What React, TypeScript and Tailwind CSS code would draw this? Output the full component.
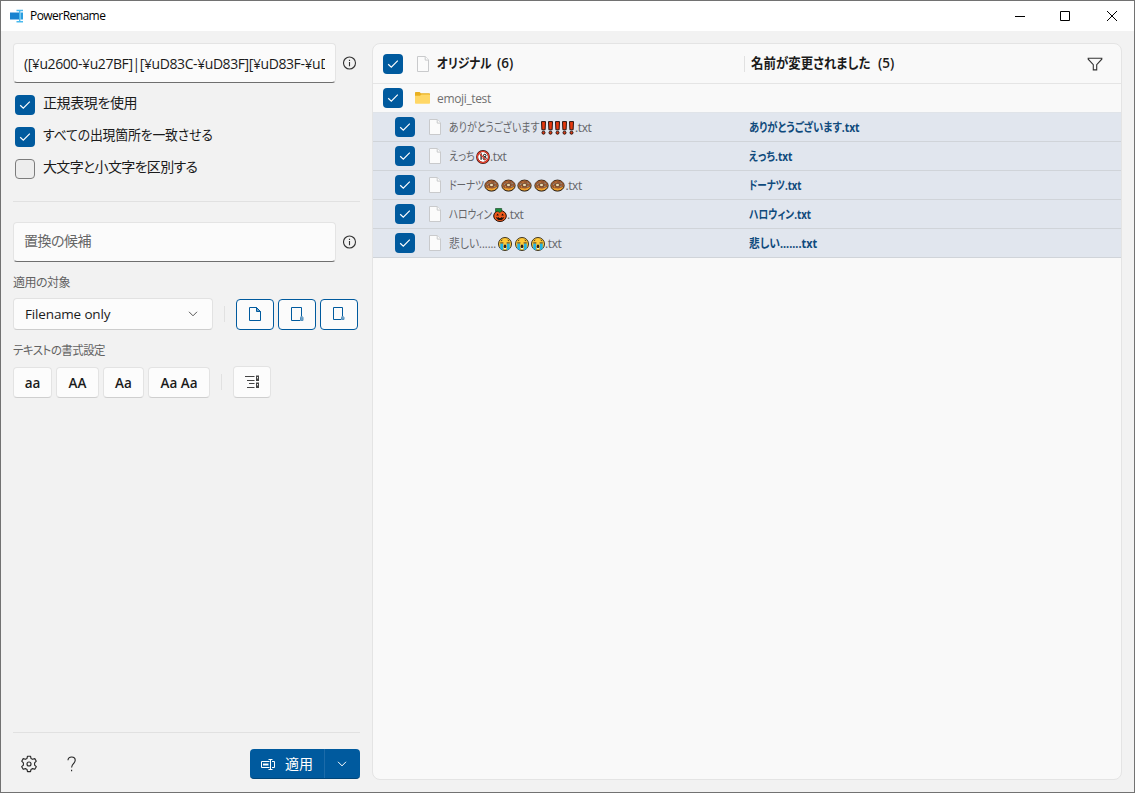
import React from "react";

const jp = "font-['Open_Sans','Noto_Sans_CJK_JP',sans-serif] [font-feature-settings:'palt']";

function Check({ on = true, className = "" }: { on?: boolean; className?: string }) {
  return (
    <span
      className={`flex h-5 w-5 shrink-0 items-center justify-center rounded-[4px] ${
        on ? "bg-[#005a9e]" : "border border-[#7c7c7c] bg-[#ededed]"
      } ${className}`}
    >
      {on && (
        <svg width="12" height="12" viewBox="0 0 12 12" fill="none" stroke="#fff" strokeWidth="1.2">
          <path d="M1.200 6.200 4.300 9.200 10.800 2.700" />
        </svg>
      )}
    </span>
  );
}

function Info() {
  return (
    <svg className="-mt-px shrink-0" width="14" height="14" viewBox="0 0 14 14" fill="none" stroke="#333" strokeWidth="1.1">
      <circle cx="6.500" cy="7" r="6" />
      <path d="M6.500 6v4.200M6.500 3.800V5" />
    </svg>
  );
}

function Page() {
  return (
    <svg className="shrink-0" width="12" height="16" viewBox="0 0 12 16" fill="#fbfbfb" stroke="#c9cacc">
      <path d="M.5.5h7.800l3.200 3.400v11.600H.5z" />
      <path d="M8.200.5v3.600h3.300" />
    </svg>
  );
}

function Folder() {
  return (
    <svg width="15" height="12" viewBox="0 0 15 12">
      <path d="M0 .8Q0 0 .8 0H4.600l1.300 1.300h8.300q.8 0 .8.8V5H0z" fill="#e9b021" />
      <path d="M0 3.800h5l1.400-1.300h7.900q.7 0 .7.700v7.800q0 .8-.8.800H.8Q0 11.800 0 11z" fill="#ffd766" />
    </svg>
  );
}

type Kind = "bang" | "adult" | "donut" | "pumpkin" | "cry";

function Emoji({ kind }: { kind: Kind }) {
  switch (kind) {
    case "bang":
      return (
        <svg width="7" height="14" viewBox="0 0 7 14" className="shrink-0">
          <path d="M1.500.6h4L5.100 8.800H1.900z" fill="#e8380d" stroke="#2a1511" />
          <circle cx="3.500" cy="11.700" r="1.500" fill="#e8380d" stroke="#2a1511" />
        </svg>
      );
    case "adult":
      return (
        <svg width="14" height="14" viewBox="0 0 14 14" className="shrink-0">
          <circle cx="7" cy="7" r="5.900" fill="#fff" stroke="#3a1512" strokeWidth="2" />
          <path d="M4 5l1.100-.8v5.600" fill="none" stroke="#111" strokeWidth="1.200" />
          <ellipse cx="8.700" cy="5.500" rx="1.300" ry="1.200" fill="none" stroke="#111" />
          <ellipse cx="8.700" cy="8.400" rx="1.500" ry="1.400" fill="none" stroke="#111" />
          <circle cx="7" cy="7" r="5.700" fill="none" stroke="#e1402d" strokeWidth="1.300" />
          <path d="M3 3l8 8" stroke="#e1402d" strokeWidth="1.100" />
        </svg>
      );
    case "donut":
      return (
        <svg width="15" height="13" viewBox="0 0 15 13" className="shrink-0">
          <ellipse cx="7.500" cy="6.600" rx="6.600" ry="5.500" fill="#efa22f" stroke="#21170f" />
          <path d="M1.400 6.500C1 3.200 4 1.600 7.500 1.600S14 3.200 13.600 6.500c-.7 2.500-3 2-4 2.700-1.500.8-2.700-.2-4 .1-2 .3-3.900-.6-4.200-2.800z" fill="#985833" />
          <ellipse cx="7.500" cy="6" rx="2.300" ry="1.400" fill="#fbe9bd" stroke="#4b2c17" strokeWidth=".7" />
          <path d="M3.300 5.500l1-.8M10.500 4l1 .6M10.500 7.500l1-.4" stroke="#7fc9d4" strokeWidth=".9" />
          <path d="M5.500 3.200h1M4 7.800h1" stroke="#f3a33c" strokeWidth=".9" />
        </svg>
      );
    case "pumpkin":
      return (
        <svg width="14" height="14" viewBox="0 0 14 14" className="shrink-0">
          <ellipse cx="7" cy="8" rx="6.300" ry="5.500" fill="#f0591c" stroke="#21110b" />
          <path d="M2.500.5h6.200v2.800l-2 1.200-2-1.200-2.200.5z" fill="#168c3c" stroke="#163a1d" strokeWidth=".6" />
          <path d="M3.200 7.600l1.500-2 1.200 2zM8.200 7.600l1.300-2 1.400 2zM2.900 9l1.600.8.8-.7.900.9h1.500l.8-.9.900.6 1.700-.8c-.3 2-1.900 3.200-4 3.200s-3.900-1.200-4.200-3.100z" fill="#1d110c" />
        </svg>
      );
    case "cry":
      return (
        <svg width="14" height="14" viewBox="0 0 14 14" className="shrink-0">
          <circle cx="7" cy="7" r="6.500" fill="#ffc937" stroke="#29200f" strokeWidth=".9" />
          <path d="M2.300 6.400h2.900v6.900L2.300 12zM8.800 6.400h2.900V12l-2.900 1.300z" fill="#22b4e6" />
          <path d="M2.200 5.900h3.200M8.600 5.900h3.200M2.900 4l1.500-1M11.100 4 9.600 3" stroke="#4a3214" strokeWidth=".9" />
          <ellipse cx="7" cy="9.400" rx="1.300" ry="1.800" fill="#382014" />
          <path d="M6 11.500h2" stroke="#e3f0f8" />
        </svg>
      );
  }
}

type Row = { name: string; kind: Kind; n: number; gap: string; renamed: string; w: string; s: string; rs: string };

const rows: Row[] = [
  { name: "ありがとうございます", kind: "bang", n: 5, gap: "gap-0", renamed: "ありがとうございます.txt", w: "w-[91px]", s: "scale-x-[0.83]", rs: "scale-x-[0.86]" },
  { name: "えっち", kind: "adult", n: 1, gap: "gap-0", renamed: "えっち.txt", w: "w-[27px]", s: "scale-x-[0.83]", rs: "scale-x-[0.84]" },
  { name: "ドーナツ", kind: "donut", n: 5, gap: "gap-[1.6px]", renamed: "ドーナツ.txt", w: "w-[35px]", s: "scale-x-[0.8]", rs: "scale-x-[0.8]" },
  { name: "ハロウィン", kind: "pumpkin", n: 1, gap: "gap-0", renamed: "ハロウィン.txt", w: "w-[44px]", s: "scale-x-[0.8]", rs: "scale-x-[0.81]" },
  { name: "悲しい......", kind: "cry", n: 3, gap: "gap-[2.5px]", renamed: "悲しい.......txt", w: "w-[49px]", s: "scale-x-[0.9]", rs: "scale-x-[0.9]" },
];

const fmtBtn =
  "flex h-[31px] items-center justify-center rounded-[4px] border border-[#e3e3e3] border-b-[#cfcfcf] bg-[#fcfcfc] pt-[2px] text-[13.5px] font-semibold text-[#1b1b1b]";
const partBtn = "flex h-[31px] w-[38px] items-center justify-center rounded-[4px] border border-[#005a9e] bg-[#fbfbfb]";

function Caption() {
  return (
    <header className="flex h-[30px] shrink-0 items-center bg-white">
      <svg className="-mt-px ml-[9px]" width="14" height="14" viewBox="0 0 14 14">
        <path d="M0 3.500h9v7H0z" fill="#1683d0" />
        <path d="M10.500 3.500H13v7h-2.500z" fill="#2a9ee0" />
        <path d="M6.500 1.500h6.500M6.500 12.800h6.500M9.700 1.500v11.300" fill="none" stroke="#49b9ee" strokeWidth="1.400" />
      </svg>
      <span className="ml-[6px] text-[12px] tracking-[-0.55px] text-black">PowerRename</span>
      <svg className="ml-auto mr-[16px]" width="103" height="12" viewBox="0 0 103 12" fill="none" stroke="#000">
        <path d="M0 6.500h10M45.500 1.500h9v9h-9zM92 1l10 10M102 1 92 11" />
      </svg>
    </header>
  );
}

function Sidebar() {
  return (
    <aside className="flex w-[359px] shrink-0 flex-col pl-3 text-[#1b1b1b]">
      <div className="mt-3 flex items-center gap-[7px]">
        <div className="flex h-10 w-[323px] items-center rounded-[4px] border border-[#e4e4e4] border-b-[#6f6f6f] bg-[#fbfbfb] px-[10px]">
          <div className="w-[302px] overflow-hidden whitespace-nowrap text-[14px] tracking-[-0.42px]">
            ([¥u2600-¥u27BF]|[¥uD83C-¥uD83F][¥uD83F-¥uD
          </div>
        </div>
        <Info />
      </div>

      <div className="ml-[2px] mt-[6px] flex flex-col text-[14px]">
        <label className="flex h-8 items-center gap-2"><Check /><span className="-mt-[5px] tracking-[-0.4px]">正規表現を使用</span></label>
        <label className="flex h-8 items-center gap-2"><Check /><span className="-mt-[5px] origin-left scale-x-[0.92] tracking-[-0.2px]">すべての出現箇所を一致させる</span></label>
        <label className="flex h-8 items-center gap-2"><Check on={false} /><span className="-mt-[5px] tracking-[-0.68px]">大文字と小文字を区別する</span></label>
      </div>

      <div className="mt-4 h-px w-[347px] bg-[#e1e1e1]" />

      <div className="mt-5 flex items-center gap-[7px]">
        <div className="flex h-10 w-[323px] items-center rounded-[4px] border border-[#e4e4e4] border-b-[#6f6f6f] bg-[#fbfbfb] px-[10px] pb-[3px] text-[14px] tracking-[-0.5px] text-[#666]">
          置換の候補
        </div>
        <Info />
      </div>

      <div className="mt-[11px] h-5 text-[12px] leading-5 tracking-[-0.5px] text-[#626262]">適用の対象</div>
      <div className="mt-[5px] flex items-center">
        <div className="flex h-8 w-[200px] items-center justify-between rounded-[4px] border border-[#e2e2e2] border-b-[#cdcdcd] bg-[#fcfcfc] pl-[11px] pr-[14px] text-[13.5px] tracking-[-0.15px]">
          Filename only
          <svg width="10" height="6" viewBox="0 0 10 6" fill="none" stroke="#555"><path d="M1 .8l4 4 4-4" /></svg>
        </div>
        <div className="ml-[11px] h-4 w-px bg-[#e1e1e1]" />
        <div className="ml-[11px] flex gap-1">
          <div className={partBtn}>
            <svg width="14" height="16" viewBox="0 0 14 16" fill="none" stroke="#005a9e"><path d="M1.500 1.500h7l4 4v9h-11z" /><path d="M8.500 1.500v4h4z" fill="#70a1c7" /></svg>
          </div>
          <div className={partBtn}>
            <svg width="14" height="16" viewBox="0 0 14 16" fill="none" stroke="#005a9e"><path d="M10 14.500H1.500v-13h10V10" /><path d="M10.500 14.500v-3l1-1.500 1.500 1.500v3z" fill="#70a1c7" stroke="#5390bd" /></svg>
          </div>
          <div className={partBtn}>
            <svg width="14" height="16" viewBox="0 0 14 16" fill="none" stroke="#005a9e"><path d="M9 13.500H1.500v-12h9V10" /><path d="M9.500 13.500v-2l1-1.500 1.500 1.500v2z" fill="#70a1c7" stroke="#5390bd" /></svg>
          </div>
        </div>
      </div>

      <div className="mt-[11px] h-5 w-fit origin-left scale-x-[0.95] text-[12px] leading-5 tracking-[-0.5px] text-[#626262]">テキストの書式設定</div>
      <div className="mt-[5px] flex items-center">
        <div className="flex gap-1 pt-px">
          <div className={`${fmtBtn} w-[39px]`}>aa</div>
          <div className={`${fmtBtn} w-[43px]`}>AA</div>
          <div className={`${fmtBtn} w-[41px]`}>Aa</div>
          <div className={`${fmtBtn} w-[62px]`}>Aa Aa</div>
        </div>
        <div className="ml-[11px] h-4 w-px bg-[#e1e1e1]" />
        <div className="ml-[11px] flex h-8 w-[38px] items-center justify-center rounded-[4px] border border-[#e3e3e3] border-b-[#cfcfcf] bg-[#fcfcfc]">
          <svg width="16" height="14" viewBox="0 0 16 14" fill="none" stroke="#444">
            <path d="M1 1.500h9.500M3 5.500h7.500M5 8.500h5.500M3 12.500h7.500" />
            <path d="M13.500 .5v13" strokeWidth="3" strokeDasharray="5.500 1.500" />
            <path d="M13.500 2v1.500M13.500 9v1.500" stroke="#eee" />
          </svg>
        </div>
      </div>

      <div className="mt-auto h-px w-[347px] bg-[#e1e1e1]" />
      <div className="flex h-[59px] w-[347px] items-center pt-[3px]">
        <svg className="ml-[7px]" width="18" height="18" viewBox="0 0 18 18" fill="none" stroke="#2b2b2b" strokeWidth="1.150" strokeLinejoin="round">
          <path d="M7.500 1.200h3l.5 2.200 1.600.9 2.200-.7 1.500 2.600-1.700 1.600v2.300l1.700 1.600-1.500 2.600-2.200-.7-1.600.9-.5 2.200h-3L7 14.500l-1.600-.9-2.200.7-1.500-2.600 1.700-1.600V7.800L1.700 6.200l1.500-2.600 2.200.7L7 3.400z" />
          <circle cx="9" cy="9" r="2" />
        </svg>
        <svg className="ml-[25px]" width="18" height="18" viewBox="0 0 18 18" fill="none" stroke="#222" strokeWidth="1.100">
          <path d="M5 5.300C5 3.200 6.400 2 8.700 2s3.500 1.300 3.500 3.200c0 3.200-3.600 3.600-3.600 7.200M8.600 14.700v1.500" />
        </svg>
        <div className="ml-auto flex h-[30px] w-[110px] items-center rounded-[4px] border-b border-[#004578] bg-[#005a9e] text-white">
          <svg className="ml-[10px] mt-[2px]" width="16" height="12" viewBox="0 0 16 12" fill="none" stroke="#fff">
            <path d="M9.500 2.500h-8v6h8M12 2.500h2.500v6H12M8.500 .5h4M8.500 10.500h4M10.500 .5v10" />
            <path d="M3 5.500h5.500" strokeWidth="2" />
          </svg>
          <span className="ml-[9px] w-[39px] text-[14px]">適用</span>
          <span className="h-full w-px bg-[#1c6ba9]" />
          <svg className="ml-3" width="10" height="6" viewBox="0 0 10 6" fill="none" stroke="#fff"><path d="M1 .8l4 4 4-4" /></svg>
        </div>
      </div>
    </aside>
  );
}

function FileRow({ row }: { row: Row }) {
  return (
    <div className="flex h-[29px] items-center border-b border-[#d0d4d9] bg-[#e1e6ee] text-[12px]">
      <Check className="ml-[22px]" />
      <div className="ml-[14px] flex w-5 shrink-0"><Page /></div>
      <div className="flex w-[300px] shrink-0 items-center pt-px text-[#646569]">
        <span className={`flex ${row.w}`}>
          <span className={`origin-left whitespace-nowrap ${row.s}`}>{row.name}</span>
        </span>
        <span className={`flex ${row.gap}`} role="img">
          {Array.from({ length: row.n }, (_, i) => <Emoji key={i} kind={row.kind} />)}
        </span>
        <span className="tracking-[-0.4px]">.txt</span>
      </div>
      <span className={`origin-left whitespace-nowrap pt-[2px] font-bold text-[#0f4a7c] ${row.rs}`}>{row.renamed}</span>
    </div>
  );
}

function FileList() {
  return (
    <main className="mb-3 mr-3 mt-3 flex flex-1 flex-col overflow-hidden rounded-[8px] border border-[#e4e4e4] bg-[#f9f9f9]">
      <div className="flex h-10 shrink-0 items-center border-b border-[#e5e5e5] text-[13.5px] font-semibold text-[#1b1b1b]">
        <Check className="ml-[10px]" />
        <div className="ml-[14px] flex w-5"><Page /></div>
        <div className="flex w-[307px] items-center gap-[5px]">
          <span className="w-[55px]"><span className="inline-block origin-left scale-x-[0.86] whitespace-nowrap">オリジナル</span></span>
          <span>(6)</span>
        </div>
        <span className="h-4 w-px bg-[#e1e1e1]" />
        <div className="ml-[6px] flex items-center gap-[5px]">
          <span className="w-[122px]"><span className="inline-block origin-left scale-x-[0.92] whitespace-nowrap">名前が変更されました</span></span>
          <span>(5)</span>
        </div>
        <svg className="ml-auto mr-[18px]" width="16" height="16" viewBox="0 0 16 16" fill="none" stroke="#333" strokeWidth="1.100">
          <path d="M1.200 2.200h13.600v1L9.700 8.700v5.200H6.300V8.700L1.200 3.200z" />
        </svg>
      </div>
      <div className="flex h-[29px] shrink-0 items-center border-b border-[#e0e4e9] text-[12px] text-[#707070]">
        <Check className="ml-[10px]" />
        <div className="ml-3 w-[22px]"><Folder /></div>
        <span className="pt-[2px] tracking-[-0.35px]">emoji_test</span>
      </div>
      {rows.map((r) => <FileRow key={r.renamed} row={r} />)}
    </main>
  );
}

export default function App() {
  return (
    <div className={`flex h-[793px] w-[1135px] flex-col overflow-hidden border border-[#727272] bg-[#f2f2f2] ${jp}`}>
      <Caption />
      <div className="flex min-h-0 flex-1">
        <Sidebar />
        <div className="flex min-w-0 flex-1 pl-3"><FileList /></div>
      </div>
    </div>
  );
}
